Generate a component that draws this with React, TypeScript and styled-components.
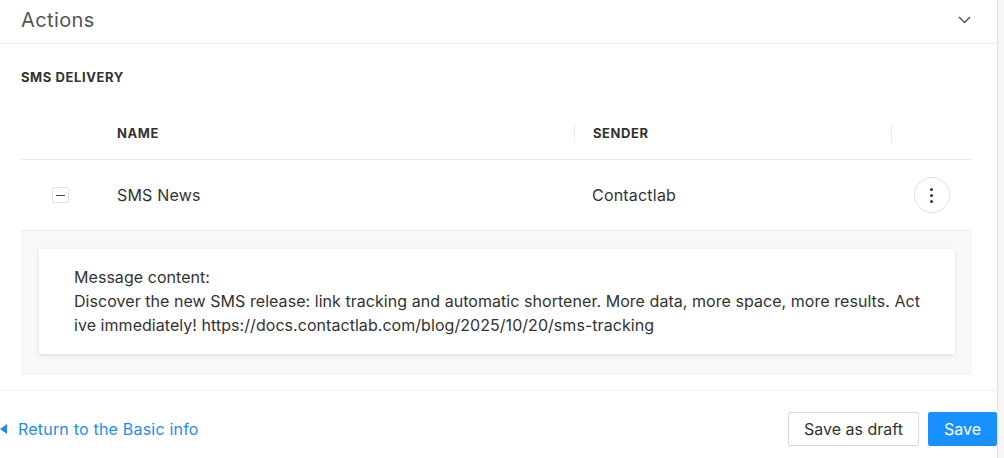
import React from "react";
import styled, { createGlobalStyle } from "styled-components";

const GlobalStyle = createGlobalStyle`
  html, body {
    margin: 0;
    padding: 0;
    background: #ffffff;
    font-family: Inter, "Open Sans", "Liberation Sans", sans-serif;
    color: #333333;
  }
  * { box-sizing: border-box; }
`;

const Page = styled.div`
  display: flex;
  width: 100%;
  height: 458px;
  overflow: hidden;
`;

const Main = styled.div`
  flex: 1;
  display: flex;
  flex-direction: column;
  min-width: 0;
`;

const Gutter = styled.div`
  width: 7px;
  background: #f6f6f6;
  border-left: 1px solid #e4e4e4;
`;

const PanelHeader = styled.div`
  height: 44px;
  display: flex;
  align-items: center;
  justify-content: space-between;
  padding: 0 26px 4px 21px;
  border-bottom: 1px solid #ececec;
`;

const PanelTitle = styled.h2`
  margin: 0;
  font-size: 20px;
  font-weight: 400;
  color: #555555;
  letter-spacing: 0.4px;
`;

const Body = styled.div`
  padding: 25px 25px 16px 21px;
  border-bottom: 1px solid #efefef;
`;

const SectionTitle = styled.div`
  font-size: 13px;
  line-height: 16px;
  font-weight: 700;
  color: #333333;
  letter-spacing: 0.6px;
`;

const columns = "80px 473px 317px 1fr";

const HeaderRow = styled.div`
  margin-top: 21px;
  height: 54px;
  display: grid;
  grid-template-columns: ${columns};
  align-items: center;
  border-bottom: 1px solid #ebebeb;
`;

const HeadCell = styled.div<{ $divider?: boolean }>`
  height: 20px;
  display: flex;
  align-items: center;
  padding-left: ${(p) => (p.$divider ? "18px" : "16px")};
  font-size: 13px;
  font-weight: 700;
  color: #333333;
  letter-spacing: 0.6px;
  border-left: ${(p) => (p.$divider ? "1px solid #ececec" : "none")};
`;

const Row = styled.div`
  height: 71px;
  display: grid;
  grid-template-columns: ${columns};
  align-items: center;
  border-bottom: 1px solid #ececec;
`;

const Cell = styled.div<{ $pad?: number }>`
  padding-left: ${(p) => p.$pad ?? 16}px;
  font-size: 16px;
  color: #333333;
  letter-spacing: 0.2px;
`;

const CenterCell = styled.div`
  display: flex;
  justify-content: center;
  align-items: center;
`;

const ExpandToggle = styled.button`
  width: 17px;
  height: 16px;
  padding: 0;
  border: 1px solid #e2e2e2;
  border-radius: 2px;
  background: #ffffff;
  display: flex;
  align-items: center;
  justify-content: center;
  cursor: pointer;
  margin-left: -2px;

  &::before {
    content: "";
    width: 9px;
    height: 1px;
    background: #444444;
  }
`;

const MenuButton = styled.button`
  width: 36px;
  height: 36px;
  border-radius: 50%;
  border: 1px solid #dedede;
  background: #ffffff;
  display: flex;
  flex-direction: column;
  align-items: center;
  justify-content: center;
  gap: 3px;
  padding: 0;
  cursor: pointer;
`;

const Dot = styled.span`
  width: 3px;
  height: 3px;
  border-radius: 50%;
  background: #333333;
`;

const Expanded = styled.div`
  background: #f8f8f8;
  padding: 18px 17px 19px 18px;
  border-bottom: 1px solid #efefef;
`;

const MessageCard = styled.div`
  background: #ffffff;
  padding: 16px 35px 17px 35px;
  box-shadow: 0 1px 4px rgba(0, 0, 0, 0.12);
  font-size: 16px;
  line-height: 24px;
  color: #333333;
  letter-spacing: 0.05px;
  word-break: break-all;
`;

const Footer = styled.div`
  flex: 1;
  display: flex;
  align-items: center;
  justify-content: space-between;
  padding: 9px 0 0 0;
`;

const BackLink = styled.a`
  display: flex;
  align-items: center;
  gap: 11px;
  color: #1e8cf0;
  font-size: 16px;
  letter-spacing: 0.2px;
  text-decoration: none;
  cursor: pointer;

  &::before {
    content: "";
    width: 0;
    height: 0;
    border-top: 5px solid transparent;
    border-bottom: 5px solid transparent;
    border-right: 7px solid #1e8cf0;
  }
`;

const Actions = styled.div`
  display: flex;
  gap: 9px;
`;

const Button = styled.button<{ $primary?: boolean }>`
  height: 34px;
  padding: 0 15px;
  font-family: inherit;
  font-size: 16px;
  border-radius: 2px;
  cursor: pointer;
  border: 1px solid ${(p) => (p.$primary ? "#1890ff" : "#d9d9d9")};
  background: ${(p) => (p.$primary ? "#1890ff" : "#ffffff")};
  color: ${(p) => (p.$primary ? "#ffffff" : "#333333")};
`;

function Chevron() {
  return (
    <svg width="13" height="8" viewBox="0 0 13 8" fill="none">
      <path d="M1 1l5.5 5.5L12 1" stroke="#555" strokeWidth="1.5" />
    </svg>
  );
}

export default function App() {
  return (
    <Page>
      <GlobalStyle />
      <Main>
        <PanelHeader>
          <PanelTitle>Actions</PanelTitle>
          <Chevron />
        </PanelHeader>
        <Body>
          <SectionTitle>SMS DELIVERY</SectionTitle>
          <HeaderRow>
            <div />
            <HeadCell>NAME</HeadCell>
            <HeadCell $divider>SENDER</HeadCell>
            <HeadCell $divider />
          </HeaderRow>
          <Row>
            <CenterCell>
              <ExpandToggle aria-label="collapse" />
            </CenterCell>
            <Cell>SMS News</Cell>
            <Cell $pad={18}>Contactlab</Cell>
            <CenterCell>
              <MenuButton aria-label="more">
                <Dot />
                <Dot />
                <Dot />
              </MenuButton>
            </CenterCell>
          </Row>
          <Expanded>
            <MessageCard>
              Message content:
              <br />
              Discover the new SMS release: link tracking and automatic
              shortener. More data, more space, more results. Active
              immediately! https://docs.contactlab.com/blog/2025/10/20/sms-tracking
            </MessageCard>
          </Expanded>
        </Body>
        <Footer>
          <BackLink>Return to the Basic info</BackLink>
          <Actions>
            <Button>Save as draft</Button>
            <Button $primary>Save</Button>
          </Actions>
        </Footer>
      </Main>
      <Gutter />
    </Page>
  );
}
